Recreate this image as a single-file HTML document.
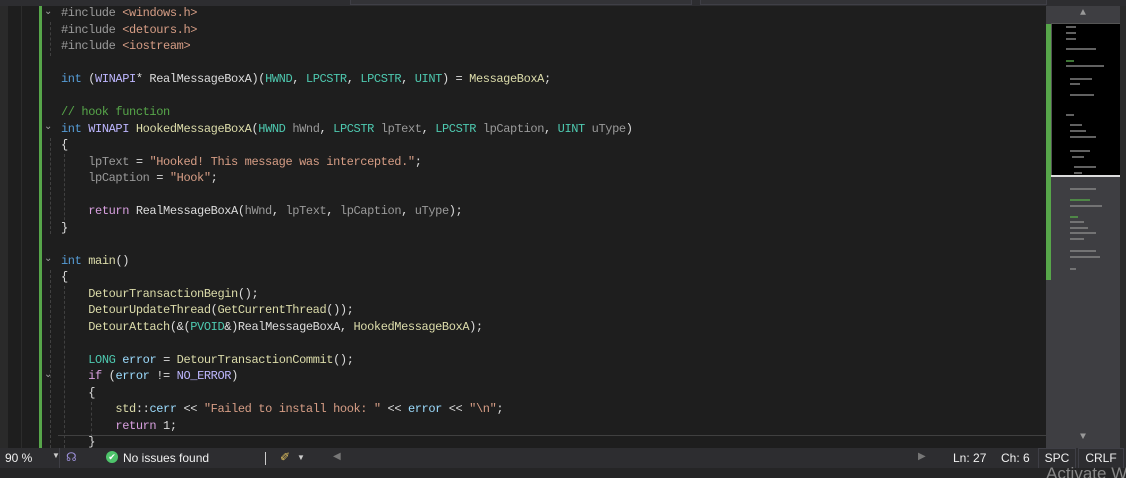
<!DOCTYPE html>
<html><head><meta charset="utf-8"><style>
html,body{margin:0;width:1126px;height:478px;overflow:hidden}
body{background:#1e1e1e;position:relative;font-family:"Liberation Mono",monospace}
.top{position:absolute;left:0;top:0;width:1126px;height:6px;background:#2d2d30}
.top i{position:absolute;top:0;height:4px;background:#333337;border:1px solid #3f3f46;border-top:none}
.lm{position:absolute;left:0;top:6px;width:8px;height:442px;background:#2a2a2a}
.lm2{position:absolute;left:21px;top:6px;width:1px;height:442px;background:#2c2c2c}
.green{position:absolute;left:39px;top:6px;width:3px;height:442px;background:#57a64a}
.code{position:absolute;left:61px;top:5px;font-size:12px;letter-spacing:-0.4px;line-height:16.5px;color:#dcdcdc;white-space:pre}
.k{color:#569cd6}.m{color:#9b9b9b}.s{color:#d69d85}.t{color:#4ec9b0}.f{color:#dcdcaa}.c{color:#57a64a}.p{color:#d8a0df}.v{color:#9cdcfe}.mc{color:#beb7ff}.g{color:#9a9a9a}
.fold{position:absolute;left:44px;color:#a0a0a0;font-size:10px;font-family:"DejaVu Sans",sans-serif}
.gl{position:absolute;border-left:1px dashed #404040}
.mm{position:absolute;left:1046px;top:6px;width:80px;height:442px;background:#3e3e42}
.mm b{position:absolute;height:2px;background:#8a8a8a;opacity:.7}
.status{position:absolute;left:0;top:448px;width:1046px;height:20px;background:#2d2d30;font-family:"Liberation Sans",sans-serif;font-size:12px;color:#f1f1f1}
.bot{position:absolute;left:0;top:468px;width:1126px;height:10px;background:#252526}
</style></head><body>
<div class="top"><i style="left:350px;width:340px"></i><i style="left:700px;width:345px"></i></div>
<div class="lm"></div><div class="lm2"></div>
<div class="green"></div>
<div class="fold" style="top:6px">⌄</div>
<div class="fold" style="top:121px">⌄</div>
<div class="fold" style="top:253px">⌄</div>
<div class="fold" style="top:369px">⌄</div>
<div class="gl" style="left:50px;top:22px;height:34px"></div>
<div class="gl" style="left:50px;top:138px;height:96px"></div>
<div class="gl" style="left:64px;top:154px;height:76px"></div>
<div class="gl" style="left:50px;top:270px;height:178px"></div>
<div class="gl" style="left:64px;top:286px;height:162px"></div>
<div class="gl" style="left:91px;top:402px;height:40px"></div>
<div style="position:absolute;left:58px;top:435px;width:988px;border-top:1px solid #404040"></div>
<div class="code"><span class="m">#include</span> <span class="s">&lt;windows.h&gt;</span>
<span class="m">#include</span> <span class="s">&lt;detours.h&gt;</span>
<span class="m">#include</span> <span class="s">&lt;iostream&gt;</span>

<span class="k">int</span> (<span class="mc">WINAPI</span>* RealMessageBoxA)(<span class="t">HWND</span>, <span class="t">LPCSTR</span>, <span class="t">LPCSTR</span>, <span class="t">UINT</span>) = <span class="f">MessageBoxA</span>;

<span class="c">// hook function</span>
<span class="k">int</span> <span class="mc">WINAPI</span> <span class="f">HookedMessageBoxA</span>(<span class="t">HWND</span> <span class="g">hWnd</span>, <span class="t">LPCSTR</span> <span class="g">lpText</span>, <span class="t">LPCSTR</span> <span class="g">lpCaption</span>, <span class="t">UINT</span> <span class="g">uType</span>)
{
    <span class="g">lpText</span> = <span class="s">"Hooked! This message was intercepted."</span>;
    <span class="g">lpCaption</span> = <span class="s">"Hook"</span>;

    <span class="p">return</span> RealMessageBoxA(<span class="g">hWnd</span>, <span class="g">lpText</span>, <span class="g">lpCaption</span>, <span class="g">uType</span>);
}

<span class="k">int</span> <span class="f">main</span>()
{
    <span class="f">DetourTransactionBegin</span>();
    <span class="f">DetourUpdateThread</span>(<span class="f">GetCurrentThread</span>());
    <span class="f">DetourAttach</span>(&amp;(<span class="t">PVOID</span>&amp;)RealMessageBoxA, <span class="f">HookedMessageBoxA</span>);

    <span class="t">LONG</span> <span class="v">error</span> = <span class="f">DetourTransactionCommit</span>();
    <span class="p">if</span> (<span class="v">error</span> != <span class="mc">NO_ERROR</span>)
    {
        <span class="f">std</span>::<span class="v">cerr</span> &lt;&lt; <span class="s">"Failed to install hook: "</span> &lt;&lt; <span class="v">error</span> &lt;&lt; <span class="s">"\n"</span>;
        <span class="p">return</span> 1;
    }</div>
<div class="mm">
 <div style="position:absolute;left:0;top:0;width:74px;height:16px;color:#999;font-size:10px;text-align:center;line-height:16px">▲</div>
 <div style="position:absolute;left:0;top:18px;width:5px;height:256px;background:#57a64a"></div>
 <div style="position:absolute;left:5px;top:17px;width:68px;height:152px;background:#000;border:1px solid #555"></div>
 <div style="position:absolute;left:5px;top:169px;width:70px;height:2px;background:#ddd"></div>
 <b style="left:20px;top:20px;width:10px"></b><b style="left:20px;top:26px;width:10px"></b><b style="left:20px;top:32px;width:10px"></b>
 <b style="left:20px;top:42px;width:30px"></b><b style="left:20px;top:54px;width:8px;background:#57a64a"></b>
 <b style="left:20px;top:59px;width:38px"></b><b style="left:24px;top:72px;width:22px"></b><b style="left:24px;top:77px;width:10px"></b>
 <b style="left:24px;top:88px;width:24px"></b><b style="left:20px;top:108px;width:8px"></b><b style="left:24px;top:118px;width:12px"></b>
 <b style="left:24px;top:124px;width:16px"></b><b style="left:24px;top:130px;width:26px"></b><b style="left:24px;top:144px;width:20px"></b>
 <b style="left:26px;top:150px;width:12px"></b><b style="left:28px;top:160px;width:22px"></b><b style="left:28px;top:166px;width:8px"></b>
 <b style="left:24px;top:182px;width:26px"></b><b style="left:24px;top:193px;width:20px;background:#57a64a"></b><b style="left:24px;top:199px;width:32px"></b>
 <b style="left:24px;top:210px;width:8px;background:#57a64a"></b><b style="left:24px;top:215px;width:14px"></b><b style="left:24px;top:221px;width:18px"></b>
 <b style="left:24px;top:226px;width:26px"></b><b style="left:24px;top:232px;width:14px"></b><b style="left:24px;top:244px;width:26px"></b>
 <b style="left:24px;top:250px;width:30px"></b><b style="left:24px;top:262px;width:6px"></b>
 <div style="position:absolute;left:74px;top:0;width:6px;height:442px;background:#2b2b2b"></div>
 <div style="position:absolute;left:0;top:424px;width:74px;height:16px;color:#999;font-size:10px;text-align:center;line-height:16px">▼</div>
</div>
<div class="status">
 <span style="position:absolute;left:5px;top:3px">90 %</span>
 <span style="position:absolute;left:52px;top:3px;font-size:8px;color:#ccc">▼</span>
 <div style="position:absolute;left:59px;top:0;width:1px;height:20px;background:#3f3f46"></div>
 <span style="position:absolute;left:66px;top:2px;color:#9b8fd6">☊</span>
 <span style="position:absolute;left:106px;top:3px;width:12px;height:12px;border-radius:6px;background:#4ec46b;color:#fff;font-size:9px;text-align:center;line-height:12px">✔</span>
 <span style="position:absolute;left:123px;top:3px">No issues found</span>
 <div style="position:absolute;left:265px;top:4px;width:1px;height:13px;background:#ccc"></div>
 <span style="position:absolute;left:280px;top:2px;color:#e0c060">✐</span>
 <span style="position:absolute;left:297px;top:5px;font-size:8px;color:#ccc">▼</span>
 <span style="position:absolute;left:333px;top:3px;color:#777;font-size:10px">◀</span>
 <span style="position:absolute;left:918px;top:3px;color:#777;font-size:10px">▶</span>
 <span style="position:absolute;left:953px;top:3px">Ln: 27</span>
 <span style="position:absolute;left:1001px;top:3px">Ch: 6</span>
</div>
<div style="position:absolute;left:1036px;top:448px;width:90px;height:20px;background:#2d2d30;font-family:'Liberation Sans',sans-serif;font-size:12px;color:#f1f1f1">
 <span style="position:absolute;left:2px;top:0;width:36px;height:19px;border:1px solid #3f3f46;text-align:center;line-height:19px">SPC</span>
 <span style="position:absolute;left:42px;top:0;width:44px;height:19px;border:1px solid #3f3f46;text-align:center;line-height:19px">CRLF</span>
</div>
<div class="bot"></div>
<div style="position:absolute;left:1046px;top:464px;font-family:'Liberation Sans',sans-serif;font-size:17px;color:#888;white-space:nowrap">Activate W</div>
</body></html>
